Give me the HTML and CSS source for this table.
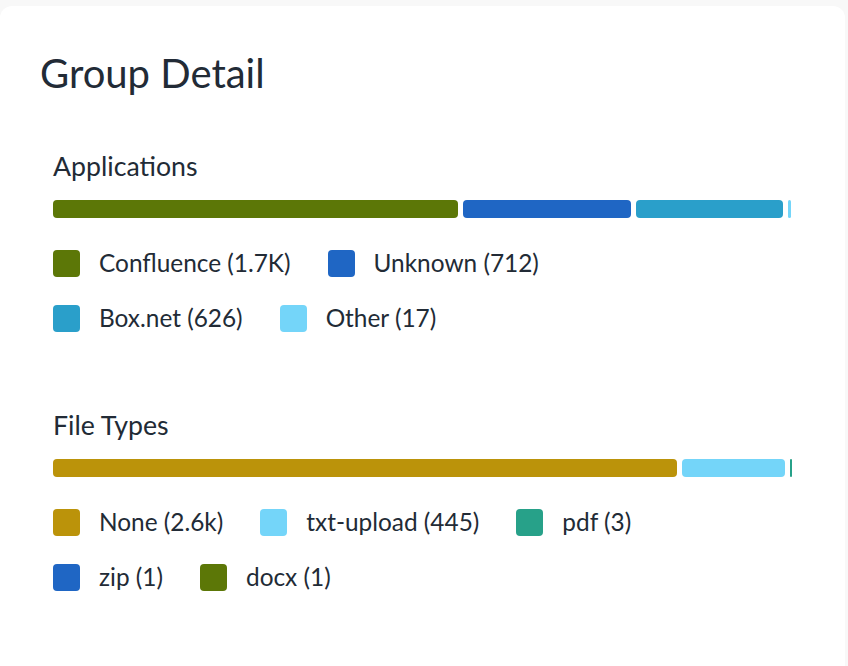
FILE: index.html
```html
<!DOCTYPE html>
<html lang="en">
<head>
<meta charset="utf-8">
<title>Group Detail</title>
<link rel="stylesheet" href="styles.css">
</head>
<body>
<div class="card">
  <h1 class="title">Group Detail</h1>

  <section class="group">
    <h2 class="group-title">Applications</h2>
    <div class="bar">
      <span class="seg c-green" style="width:405px"></span>
      <span class="seg c-blue" style="width:168px"></span>
      <span class="seg c-teal" style="width:147px"></span>
      <span class="seg c-sky" style="width:3px"></span>
    </div>
    <ul class="legend">
      <li class="item"><span class="swatch c-green"></span>Confluence (1.7K)</li>
      <li class="item"><span class="swatch c-blue"></span>Unknown (712)</li>
      <li class="item"><span class="swatch c-teal"></span>Box.net (626)</li>
      <li class="item"><span class="swatch c-sky"></span>Other (17)</li>
    </ul>
  </section>

  <section class="group group-second">
    <h2 class="group-title">File Types</h2>
    <div class="bar">
      <span class="seg c-gold" style="width:624px"></span>
      <span class="seg c-sky" style="width:103px"></span>
      <span class="seg c-jade" style="width:2px"></span>
    </div>
    <ul class="legend">
      <li class="item"><span class="swatch c-gold"></span>None (2.6k)</li>
      <li class="item"><span class="swatch c-sky"></span>txt-upload (445)</li>
      <li class="item"><span class="swatch c-jade"></span>pdf (3)</li>
      <li class="item"><span class="swatch c-blue"></span>zip (1)</li>
      <li class="item"><span class="swatch c-green"></span>docx (1)</li>
    </ul>
  </section>
</div>
</body>
</html>
```

FILE: styles.css
```css
html, body {
  margin: 0;
  padding: 0;
  background: #f8f8f8;
  font-family: Lato, "Open Sans", sans-serif;
  color: #222b36;
}

.card {
  margin: 6px 3px 0 0;
  background: #ffffff;
  border-radius: 12px;
  padding: 43px 40px 80px 40px;
  min-height: 600px;
}

.title {
  margin: 0;
  font-size: 40px;
  line-height: 48px;
  font-weight: 400;
  color: #222b36;
}

.group {
  padding-left: 13px;
  margin-top: 53px;
}

.group-second {
  margin-top: 77px;
}

.group-title {
  margin: 0;
  font-size: 26.7px;
  line-height: 32px;
  font-weight: 400;
  color: #222b36;
}

.bar {
  display: flex;
  gap: 5px;
  height: 18px;
  margin-top: 18px;
}

.seg {
  display: block;
  height: 100%;
  border-radius: 4px;
  flex: none;
}

.legend {
  list-style: none;
  margin: 32px 0 0 0;
  padding: 0;
  display: flex;
  flex-wrap: wrap;
  column-gap: 37px;
  row-gap: 28px;
  max-width: 640px;
}

.item {
  display: flex;
  align-items: flex-start;
  gap: 19px;
  height: 27px;
  font-size: 24.4px;
  line-height: 25px;
}

.swatch {
  width: 27px;
  height: 27px;
  border-radius: 4px;
  flex: none;
}

.c-green { background: #5c7707; }
.c-blue { background: #1f66c4; }
.c-teal { background: #2a9fca; }
.c-sky { background: #74d5f9; }
.c-gold { background: #bb930a; }
.c-jade { background: #27a189; }
```
